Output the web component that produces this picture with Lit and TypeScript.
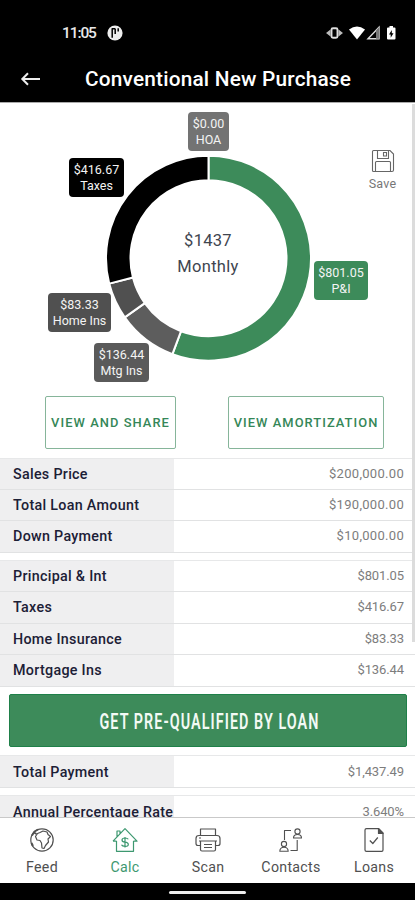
import { LitElement, html, css, svg } from "lit";
import { customElement } from "lit/decorators.js";

type Row = [string, string];

const LOAN_ROWS: Row[] = [
  ["Sales Price", "$200,000.00"],
  ["Total Loan Amount", "$190,000.00"],
  ["Down Payment", "$10,000.00"],
];
const PAYMENT_ROWS: Row[] = [
  ["Principal & Int", "$801.05"],
  ["Taxes", "$416.67"],
  ["Home Insurance", "$83.33"],
  ["Mortgage Ins", "$136.44"],
];

const SLICES = [
  { value: 801.05, color: "#3d8b5a" },
  { value: 136.44, color: "#5d5d5d" },
  { value: 83.33, color: "#505050" },
  { value: 416.67, color: "#000" },
];

@customElement("payment-donut")
export class PaymentDonut extends LitElement {
  static styles = css`
    :host { display: block; position: relative; height: 293px; font-family: Roboto, sans-serif; }
    .ring { display: block; width: 415px; height: 293px; }
    .center { position: absolute; left: 158px; top: 125px; width: 100px; text-align: center; color: #40454f; font-size: 16.5px; line-height: 26px; letter-spacing: 0.3px; }
    .tag { position: absolute; box-sizing: border-box; height: 39px; padding-top: 4px; border-radius: 4px; color: #f4f4f4; text-align: center; font-size: 12.5px; line-height: 15.5px; white-space: nowrap; }
    .hoa { left: 188px; top: 9px; width: 41px; background: #737373; }
    .taxes { left: 69px; top: 55px; width: 55px; background: #000; }
    .home { left: 48px; top: 190px; width: 63px; background: #505050; }
    .mtg { left: 94px; top: 240px; width: 55px; background: #5a5a5a; }
    .pi { left: 314px; top: 158px; width: 54px; background: #3d8b5a; }
    .save { position: absolute; left: 362px; top: 46px; width: 41px; display: flex; flex-direction: column; align-items: center; gap: 3px; color: #777; font-size: 12.5px; line-height: 15px; letter-spacing: 0.2px; }
  `;

  private slices() {
    const total = SLICES.reduce((sum, s) => sum + s.value, 0);
    const cx = 208.5, cy = 155.2, outer = 102.5, inner = 78;
    const at = (r: number, a: number) => `${cx + r * Math.sin(a)} ${cy - r * Math.cos(a)}`;
    let angle = 0;
    return SLICES.map((s) => {
      const end = angle + (s.value / total) * Math.PI * 2;
      const large = end - angle > Math.PI ? 1 : 0;
      const d = `M${at(outer, angle)}A${outer} ${outer} 0 ${large} 1 ${at(outer, end)}L${at(inner, end)}A${inner} ${inner} 0 ${large} 0 ${at(inner, angle)}Z`;
      angle = end;
      return svg`<path d=${d} fill=${s.color} stroke="#fff" stroke-width="2"></path>`;
    });
  }

  render() {
    return html`
      <svg class="ring" viewBox="0 0 415 293">${this.slices()}</svg>
      <div class="center">$1437<br />Monthly</div>
      <div class="tag hoa">$0.00<br />HOA</div>
      <div class="tag taxes">$416.67<br />Taxes</div>
      <div class="tag home">$83.33<br />Home Ins</div>
      <div class="tag mtg">$136.44<br />Mtg Ins</div>
      <div class="tag pi">$801.05<br />P&amp;I</div>
      <div class="save">
        <svg width="24" height="24" viewBox="0 0 24 24" fill="none" stroke="#666" stroke-width="1.1">
          <path d="M1.500 2.500q0-1 1-1H19l3.500 3.500v16q0 1.500-1.500 1.500H2.500q-1 0-1-1z" />
          <path d="M6.500 1.500v8h11v-8M12.500 3.500h3v3.500h-3zM4.500 22V13.500q0-1 1-1h13q1 0 1 1V22" />
        </svg>
        <span>Save</span>
      </div>
    `;
  }
}

@customElement("app-root")
export class AppRoot extends LitElement {
  static styles = css`
    :host { display: flex; flex-direction: column; position: relative; width: 415px; height: 900px; overflow: hidden; background: #fff; font-family: Roboto, "Noto Sans", sans-serif; }
    svg { display: block; }
    .top { flex: none; height: 103px; background: #000; color: #fff; border-bottom: 1px solid #aaa; box-sizing: border-box; }
    .status { height: 58px; padding: 8px 18px 0 62px; box-sizing: border-box; display: flex; align-items: center; font-size: 15.5px; font-weight: 500; color: #e8e8e8; }
    .clock { width: 34px; letter-spacing: -1.1px; white-space: nowrap; }
    .status .badge { margin-left: 11px; }
    .signals { margin-left: auto; }
    .title { display: flex; align-items: center; height: 42px; padding-left: 20px; }
    .title h1 { margin: 0 0 0 44px; font-size: 20.8px; font-weight: 500; line-height: 24px; letter-spacing: 0.2px; white-space: nowrap; }
    .scroll { flex: 1; min-height: 0; overflow: hidden; }
    .actions { display: flex; margin-left: 45px; gap: 52px; padding-bottom: 9px; }
    .action { box-sizing: border-box; height: 52.5px; border: 1px solid #86b59a; border-radius: 2px; display: flex; align-items: center; justify-content: center; color: #358758; font-size: 12.9px; font-weight: 500; letter-spacing: 1.05px; white-space: nowrap; }
    .share { width: 131px; }
    .amort { width: 156px; }
    .group { border-top: 1px solid #e7e8e9; margin-bottom: 7px; }
    .row { display: grid; grid-template-columns: 173.5px 1fr; height: 31.4px; box-sizing: border-box; border-bottom: 1px solid #e1e2e3; line-height: 30px; }
    .payments .row { height: 31.6px; }
    .totals .row { height: 32px; line-height: 32px; }
    .totals .name, .totals .value { height: 31px; }
    .name { background: #efeff0; padding-left: 13px; color: #1c2036; font-size: 14.3px; font-weight: 500; letter-spacing: 0.3px; white-space: nowrap; }
    .value { padding-right: 11px; text-align: right; color: #7d7d7d; font-size: 13px; letter-spacing: -0.1px; }
    .value.wide { letter-spacing: 0.3px; }
    .cta { display: block; margin: 0 8px 8px 9px; height: 53px; box-sizing: border-box; border: 1px solid #1f8049; border-radius: 2px; background: #3d8b5a; }
    .cta text { fill: #f3faf5; font: 600 21.5px Roboto, sans-serif; letter-spacing: 1.6px; }
    .track { position: absolute; right: 0; top: 104px; width: 3px; height: 538px; background: #dcdcdc; }
    .nav { flex: none; height: 66px; box-sizing: border-box; border-top: 1px solid #c9c9c9; background: #fff; display: grid; grid-template-columns: repeat(5, 83px); }
    .tab { display: flex; flex-direction: column; align-items: center; padding: 9px 0 0 1px; gap: 5px; color: #505050; font-size: 14.2px; line-height: 18px; letter-spacing: 0.3px; }
    .tab.active { color: #3d9870; }
    .gesture { flex: none; height: 17px; background: #000; display: flex; justify-content: center; align-items: center; padding-top: 1px; box-sizing: border-box; }
    .pill { width: 77px; height: 3px; border-radius: 2px; background: #eee; }
  `;

  private group(rows: Row[], kind = "") {
    return html`<div class="group ${kind}">
      ${rows.map(([name, value]) => html`<div class="row"><div class="name">${name}</div><div class="value ${value.length >= 10 ? "wide" : ""}">${value}</div></div>`)}
    </div>`;
  }

  private tab(label: string, icon: unknown, active = false) {
    return html`<div class="tab ${active ? "active" : ""}">
      <svg width="26" height="26" viewBox="0 0 26 26" fill="none" stroke="currentColor" stroke-width="1.2" stroke-linejoin="round">${icon}</svg>
      <span>${label}</span>
    </div>`;
  }

  render() {
    return html`
      <header class="top">
        <div class="status">
          <span class="clock">11:05</span>
          <svg class="badge" width="16" height="16" viewBox="0 0 16 16">
            <circle cx="8" cy="8" r="7.600" fill="#eee" />
            <path d="M5.200 3.300v9.500M8.200 3.500v5.500M11.200 3.300v3.200M5 3.800h3" stroke="#000" stroke-width="1.500" fill="none" />
          </svg>
          <svg class="signals" width="71" height="16" viewBox="0 0 71 16">
            <path d="M4.500 4.500L0 8l4.500 3.500zM12.500 4.500L17 8l-4.500 3.500z" fill="#bbb" />
            <rect x="5.500" y="3.200" width="6" height="9.600" rx="1.500" fill="#000" stroke="#ddd" stroke-width="1.900" />
            <path d="M23 4.500q8-6 16 0L31 14.500z" fill="#fff" />
            <path d="M42 13.800L53 2.300v11.500z" fill="none" stroke="#ddd" stroke-width="1.400" />
            <path d="M50 5.500L53 2.300v11.500h-3z" fill="#777" />
            <path d="M61 3.500q0-1 1-1h1.500V1h3.500v1.500h1.500q1 0 1 1v10q0 1-1 1H62q-1 0-1-1z" fill="#fff" />
            <path d="M65.800 5l-2.800 4.500h1.700v3.200l2.800-4.500h-1.700z" fill="#000" />
          </svg>
        </div>
        <div class="title">
          <svg width="21" height="16" viewBox="0 0 21 16" fill="none" stroke="#eee" stroke-width="2"><path d="M20 8H2.500M8 2.300L2.300 8 8 13.700" /></svg>
          <h1>Conventional New Purchase</h1>
        </div>
      </header>
      <main class="scroll">
        <payment-donut></payment-donut>
        <div class="actions">
          <div class="action share">VIEW AND SHARE</div>
          <div class="action amort">VIEW AMORTIZATION</div>
        </div>
        ${this.group(LOAN_ROWS)}
        ${this.group(PAYMENT_ROWS, "payments")}
        <div class="cta">
          <svg width="396" height="51"><text x="89.500" y="34" textLength="220" lengthAdjust="spacingAndGlyphs">GET PRE-QUALIFIED BY LOAN</text></svg>
        </div>
        ${this.group([["Total Payment", "$1,437.49"]], "totals")}
        ${this.group([["Annual Percentage Rate", "3.640%"]], "totals")}
      </main>
      <div class="track"></div>
      <nav class="nav">
        ${this.tab("Feed", svg`<circle cx="13" cy="13" r="11.200"></circle><path d="M11 5.500l3-1.500 4 1 1 2.500 2.500 2-2.500 2.500.5 3-3 3.500-1.500 3-2-.5-.5-5-1.500-2.500-3-.5-1.500-3.500 2-3z"></path><path d="M3 8.500l2.500-4L9 2.500M5 5.500L7.500 7M2.500 16l1.500 3" stroke-width="1.900"></path>`)}
        ${this.tab("Calc", svg`<path d="M4.500 14v10.300h17V14M1 14.200L13 1.700l12 12.500h-3.500M1 14.200h3.500M5 9.500V4h3v2.500"></path><path d="M16.300 12.300q-.800-1.300-3.300-1.300-3 0-3 2t3 2.200q3.300.300 3.300 2.300T13 19.300q-2.800 0-3.500-1.500M13 10v10.500"></path>`, true)}
        ${this.tab("Scan", svg`<path d="M5.500 8.500V2h15v6.500M5.500 18.500H3Q1 18.500 1 16.500v-5q0-3 3-3h18q3 0 3 3v5q0 2-2 2h-2.500M5.500 14h15v8.500q0 1.500-1.500 1.500H7q-1.500 0-1.500-1.500zM4 14h18M9 17.500h8M9 20.500h8M4 11h2"></path>`)}
        ${this.tab("Contacts", svg`<g stroke-width="1.100"><circle cx="19.500" cy="4.500" r="2.600"></circle><path d="M15.500 11q0-3.500 4-3.500t4 3.500zM13 3.500H6.500V13"></path><circle cx="6" cy="17" r="2.600"></circle><path d="M1.800 24.300Q2 20.300 6 20.300t4.200 4zM12.500 23.500h6.700V13"></path></g>`)}
        ${this.tab("Loans", svg`<path d="M5.500 1.700h12.300L22 6v17q0 1.300-1.300 1.300H5.500Q4 24.300 4 23V3q0-1.300 1.500-1.300z"></path><path d="M17.500 2v4.500H22z" fill="currentColor"></path><path d="M8.800 13.500l3 3 5-6"></path>`)}
      </nav>
      <div class="gesture"><div class="pill"></div></div>
    `;
  }
}
